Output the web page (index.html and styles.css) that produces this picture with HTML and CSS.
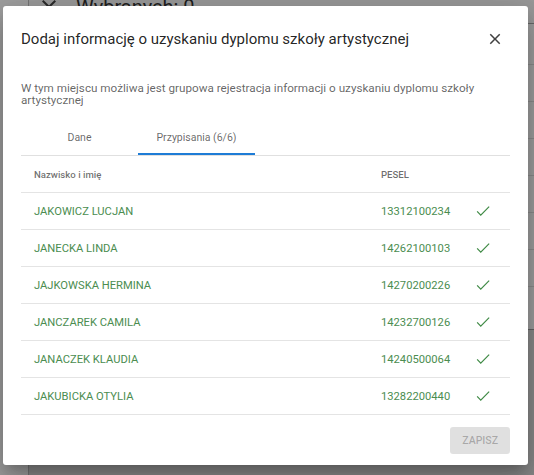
FILE: index.html
```html
<!DOCTYPE html>
<html lang="pl">
<head>
<meta charset="utf-8">
<title>Dodaj informację o uzyskaniu dyplomu szkoły artystycznej</title>
<link rel="stylesheet" href="styles.css">
</head>
<body>
<div class="page">
  <aside class="side"></aside>
  <main class="main">
    <div class="toolbar">
      <svg class="tb-icon" viewBox="0 0 24 24"><path d="M19 6.41L17.59 5 12 10.59 6.41 5 5 6.41 10.59 12 5 17.59 6.41 19 12 13.41 17.59 19 19 17.59 13.41 12z"/></svg>
      <span class="tb-title">Wybranych: 0</span>
    </div>
    <div class="card">
      <div class="card-head"></div>
      <div class="card-row"></div>
      <div class="card-row"></div>
      <div class="card-row"></div>
      <div class="card-row"></div>
      <div class="card-row"></div>
      <div class="card-row"></div>
      <div class="card-foot"></div>
    </div>
  </main>
</div>

<div class="backdrop"></div>

<div class="dialog" role="dialog">
  <div class="dlg-head">
    <h2 class="dlg-title">Dodaj informację o uzyskaniu dyplomu szkoły artystycznej</h2>
    <button class="close-btn" type="button" aria-label="Zamknij">
      <svg viewBox="0 0 24 24"><path d="M19 6.41L17.59 5 12 10.59 6.41 5 5 6.41 10.59 12 5 17.59 6.41 19 12 13.41 17.59 19 19 17.59 13.41 12z"/></svg>
    </button>
  </div>
  <p class="desc">W tym miejscu możliwa jest grupowa rejestracja informacji o uzyskaniu dyplomu szkoły artystycznej</p>
  <div class="tabs">
    <div class="tab">Dane</div>
    <div class="tab active">Przypisania (6/6)</div>
  </div>
  <div class="table">
    <div class="row head">
      <div>Nazwisko i imię</div>
      <div>PESEL</div>
      <div></div>
    </div>
    <div class="row">
      <div>JAKOWICZ LUCJAN</div>
      <div>13312100234</div>
      <svg class="check" viewBox="0 0 24 24"><polyline points="4.2,12.6 9,17.4 20.2,6.2"/></svg>
    </div>
    <div class="row">
      <div>JANECKA LINDA</div>
      <div>14262100103</div>
      <svg class="check" viewBox="0 0 24 24"><polyline points="4.2,12.6 9,17.4 20.2,6.2"/></svg>
    </div>
    <div class="row">
      <div>JAJKOWSKA HERMINA</div>
      <div>14270200226</div>
      <svg class="check" viewBox="0 0 24 24"><polyline points="4.2,12.6 9,17.4 20.2,6.2"/></svg>
    </div>
    <div class="row">
      <div>JANCZAREK CAMILA</div>
      <div>14232700126</div>
      <svg class="check" viewBox="0 0 24 24"><polyline points="4.2,12.6 9,17.4 20.2,6.2"/></svg>
    </div>
    <div class="row">
      <div>JANACZEK KLAUDIA</div>
      <div>14240500064</div>
      <svg class="check" viewBox="0 0 24 24"><polyline points="4.2,12.6 9,17.4 20.2,6.2"/></svg>
    </div>
    <div class="row">
      <div>JAKUBICKA OTYLIA</div>
      <div>13282200440</div>
      <svg class="check" viewBox="0 0 24 24"><polyline points="4.2,12.6 9,17.4 20.2,6.2"/></svg>
    </div>
  </div>
  <div class="actions">
    <button class="save-btn" type="button" disabled>ZAPISZ</button>
  </div>
</div>
</body>
</html>
```

FILE: styles.css
```css
* {
  box-sizing: border-box;
}

html, body {
  margin: 0;
  padding: 0;
  width: 534px;
  height: 475px;
  overflow: hidden;
  font-family: Roboto, "Liberation Sans", sans-serif;
}

/* underlying page */
.page {
  display: flex;
  height: 475px;
  background: #dedede;
}

.side {
  width: 29px;
  background: #ffffff;
  border-right: 1px solid #bdbdbd;
}

.main {
  flex: 1;
  display: flex;
  flex-direction: column;
}

.toolbar {
  margin-top: -9px;
  height: 33px;
  display: flex;
  align-items: center;
  padding-left: 8px;
  gap: 15px;
  background: #f7f7f7;
  border-bottom: 1px solid #a8a8a8;
  color: #333;
}

.tb-icon {
  width: 24px;
  height: 24px;
  fill: #444;
}

.tb-title {
  font-size: 20px;
  line-height: 24px;
}

.card {
  background: #ffffff;
  border-bottom: 1px solid #9e9e9e;
}

.card-head {
  height: 41px;
  border-bottom: 1px solid #e0e0e0;
}

.card-row {
  height: 37px;
  border-bottom: 1px solid #e0e0e0;
}

.card-foot {
  height: 42px;
}

/* overlay */
.backdrop {
  position: absolute;
  inset: 0;
  background: rgba(0, 0, 0, 0.38);
}

.dialog {
  position: absolute;
  left: 3px;
  top: 6px;
  width: 525px;
  padding: 18px 18px 11px;
  background: #ffffff;
  border-radius: 3px;
  box-shadow: 0 8px 11px -5px rgba(0, 0, 0, 0.2),
              0 18px 28px 2px rgba(0, 0, 0, 0.14),
              0 7px 34px 6px rgba(0, 0, 0, 0.12);
}

.dlg-head {
  display: flex;
  align-items: center;
  justify-content: space-between;
  height: 30px;
}

.dlg-title {
  margin: 0;
  font-size: 15px;
  line-height: 30px;
  font-weight: 400;
  color: rgba(0, 0, 0, 0.87);
}

.close-btn {
  width: 30px;
  height: 30px;
  padding: 0;
  border: 0;
  background: transparent;
  display: flex;
  align-items: center;
  justify-content: center;
}

.close-btn svg {
  width: 18px;
  height: 18px;
  fill: rgba(0, 0, 0, 0.75);
}

.desc {
  margin: 28px 0 0;
  font-size: 11.7px;
  line-height: 12px;
  color: rgba(0, 0, 0, 0.62);
}

.tabs {
  margin-top: 13px;
  display: flex;
  border-bottom: 1px solid #e0e0e0;
}

.tab {
  width: 117px;
  height: 36px;
  display: flex;
  align-items: center;
  justify-content: center;
  font-size: 10.5px;
  color: rgba(0, 0, 0, 0.6);
}

.tab.active {
  box-shadow: inset 0 -2px 0 #1e7cd6;
}

.table {
  display: flex;
  flex-direction: column;
}

.row {
  display: grid;
  grid-template-columns: 1fr 93px 18px;
  align-items: center;
  height: 37px;
  padding: 0 18px 0 13px;
  border-bottom: 1px solid #e4e4e4;
  font-size: 11.2px;
  color: #4b8d50;
}

.row.head {
  font-size: 9.6px;
  font-weight: 500;
  color: rgba(0, 0, 0, 0.58);
}

.check {
  width: 18px;
  height: 18px;
  fill: none;
  stroke: #3f8a45;
  stroke-width: 1.6;
}

.actions {
  display: flex;
  justify-content: flex-end;
  margin-top: 12px;
}

.save-btn {
  height: 27px;
  padding: 0 12px;
  border: 0;
  border-radius: 3px;
  background: rgba(0, 0, 0, 0.12);
  color: rgba(0, 0, 0, 0.26);
  font-family: Roboto, "Liberation Sans", sans-serif;
  font-size: 10.5px;
  font-weight: 500;
}
```
